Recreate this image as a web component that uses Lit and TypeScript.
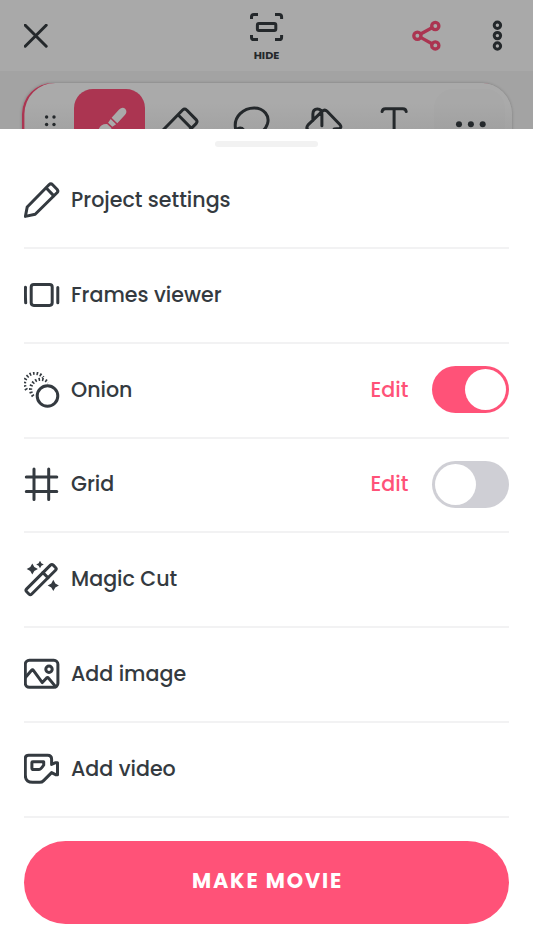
import { LitElement, html, css, svg, nothing } from "lit";
import { customElement, property, state } from "lit/decorators.js";
import { classMap } from "lit/directives/class-map.js";

const star = (x: number, y: number, r: number) =>
  svg`<path class="fill" d="M${x} ${y - r}L${x + r * 0.36} ${y - r * 0.36}L${x + r} ${y}L${x + r * 0.36} ${y + r * 0.36}L${x} ${y + r}L${x - r * 0.36} ${y + r * 0.36}L${x - r} ${y}L${x - r * 0.36} ${y - r * 0.36}Z"/>`;

const icons: Record<string, unknown> = {
  pencil: svg`<path d="M1.4 34.4L3.2 25L25 2.8Q26.8 1 28.6 2.8L33 7.2Q34.7 9 33 10.8L11.2 32.3Z"/><path d="M22.5 6.2L29.6 13.6"/>`,
  frames: svg`<rect x="7.2" y="7.4" width="21" height="21" rx="2.6"/><path d="M1.5 10.2Q1.2 18 1.7 25.8M33.8 10.4V25.8"/>`,
  onion: svg`<circle cx="23.5" cy="24" r="10.3"/><path class="dots" d="M2.6 17.9A10.3 10.3 0 1 1 19.2 5.4"/><path class="dots" d="M9.2 24.2A10.1 10.1 0 0 1 24.2 10.6"/>`,
  grid: svg`<path d="M10 2.9V33.6M24.7 2.9V33.6M2.3 10.9H32.8M2.3 25.6H32.8"/>`,
  magic: svg`<g transform="translate(17.1 18.6) rotate(-45)"><rect x="-18.8" y="-3.6" width="37.6" height="7.2" rx="2"/><path d="M6.2 -3.6V3.6"/></g>${star(8.3, 8, 5.6)}${star(16, 3.5, 3.8)}${star(29.3, 24.4, 5.6)}`,
  image: svg`<rect x="1.3" y="4.3" width="32.6" height="27" rx="4"/><circle cx="25" cy="13.3" r="3.2"/><path d="M1.6 21.2L7.6 14.2Q8.5 13.2 9.4 14.4L18.3 26.6L22.6 21.9Q23.6 21 24.4 22L31.6 30.6"/>`,
  video: svg`<path d="M4.6 4.3H23.6Q27.6 4.3 27.6 8.3V13.4L31.6 11.7H33.5V23.7H31.6L27.6 21.6L19.6 29.6Q18 31.3 15.6 31.3H8.6Q1.3 31.3 1.3 24V7.6Q1.3 4.3 4.6 4.3Z"/><path d="M8.8 10.7H19.7V14Q16.8 18.6 14.6 18.6H9.4Q7.9 18.6 7.9 17V11.6Q7.9 10.7 8.8 10.7Z"/>`,
};

@customElement("toggle-switch")
export class ToggleSwitch extends LitElement {
  @property({ type: Boolean }) on = false;
  static styles = css`
    :host { display: block; flex: none; }
    .track { display: flex; box-sizing: border-box; width: 77.3px; height: 47px; padding: 3px; border-radius: 24px; background: #cfcfd5; }
    .track.on { justify-content: flex-end; background: #ff5278; }
    .knob { width: 41px; height: 41px; border-radius: 50%; background: #fff; }
  `;
  render() {
    return html`<div class=${classMap({ track: true, on: this.on })}><div class="knob"></div></div>`;
  }
}

interface Item { icon: string; label: string; toggle?: boolean; on?: boolean; }

@customElement("app-root")
export class AppRoot extends LitElement {
  @state() private items: Item[] = [
    { icon: "pencil", label: "Project settings" },
    { icon: "frames", label: "Frames viewer" },
    { icon: "onion", label: "Onion", toggle: true, on: true },
    { icon: "grid", label: "Grid", toggle: true, on: false },
    { icon: "magic", label: "Magic Cut" },
    { icon: "image", label: "Add image" },
    { icon: "video", label: "Add video" },
  ];

  static styles = css`
    :host { display: flex; flex-direction: column; height: 947px; overflow: hidden; background: #fff; color: #343a40; font-family: Poppins, Inter, sans-serif; }
    svg { display: block; flex: none; fill: none; stroke: currentColor; stroke-width: 3; stroke-linecap: round; stroke-linejoin: round; }
    .fill { fill: currentColor; stroke: none; }
    .dots { stroke-width: 3.2; stroke-linecap: butt; stroke-dasharray: 1.6 1.9; }
    .backdrop { flex: none; height: 129px; overflow: hidden; background: #a3a3a3; color: #24282b; }
    .bar { display: flex; justify-content: space-between; height: 71px; padding: 0 24px; box-sizing: border-box; background: #a9a9a9; }
    .side { display: flex; align-items: center; width: 120px; }
    .side.end { justify-content: flex-end; gap: 51px; }
    .pink { color: #ab3551; stroke-width: 3.3; }
    .hide { display: flex; flex-direction: column; align-items: center; padding-top: 12px; font: 700 11.2px/16px Poppins, "Noto Sans", sans-serif; }
    .hide span { margin-top: 5px; }
    .tools { display: flex; box-sizing: border-box; width: 490px; height: 90px; margin: 12px 0 0 22px; padding: 6px 6px 0 15px; border-radius: 31px; background: linear-gradient(#aaa 0 20px, #a3a3a3 46px); box-shadow: inset 2.4px 0 0 #ab3551, 0 0 3px rgba(0,0,0,.25); }
    .dotsgrip { width: 37px; }
    .tool { width: 71.2px; height: 84px; flex: none; }
    .tool.active { border-radius: 19px; background: #ab3551; color: #aaa; }
    .tool.more { margin-left: 4px; border-radius: 19px; background: rgba(0,0,0,.012); }
    .sheet { flex: 1; display: flex; flex-direction: column; padding: 12px 24px 23px; }
    .handle { align-self: center; width: 103px; height: 6px; border-radius: 3px; background: #f2f2f2; }
    .list { margin-top: 7px; }
    .row { display: flex; align-items: center; box-sizing: border-box; height: 94.85px; padding-bottom: 1px; border-bottom: 2px solid #f2f2f3; font-size: 20.6px; font-weight: 500; line-height: 28px; }
    .label { flex: 1; margin-left: 11px; white-space: nowrap; }
    .edit { margin-right: 23.3px; color: #ff5278; }
    .make { display: flex; align-items: center; justify-content: center; box-sizing: border-box; width: 100%; height: 83px; margin-top: auto; padding: 0 0 3px 2px; border: 0; border-radius: 42px; background: #ff5278; color: #fff; font: 700 20.8px/28px Poppins, Inter, sans-serif; letter-spacing: 1.85px; }
  `;

  render() {
    return html`
      <div class="backdrop">
        <header class="bar">
          <div class="side"><svg width="24" height="24" viewBox="0 0 24 24"><path d="M1.2 1.2L22.2 22.2M22.2 1.2L1.2 22.2"/></svg></div>
          <div class="hide">
            <svg width="35" height="30" viewBox="249 12 35 30"><path stroke-linecap="butt" d="M251.5 19V16.8Q251.5 14.4 254 14.4H258M275 14.4H279.2Q281.6 14.4 281.6 16.8V19M281.6 35V37.2Q281.6 39.6 279.2 39.6H275M258 39.6H254Q251.5 39.6 251.5 37.2V35"/><rect x="257.4" y="23.4" width="18.4" height="7.2" rx="1.5"/></svg>
            <span>HIDE</span>
          </div>
          <div class="side end">
            <svg class="pink" width="30" height="32" viewBox="411 20 30 32"><circle cx="417.4" cy="35.7" r="3.6"/><circle cx="435.3" cy="26" r="3.6"/><circle cx="435.3" cy="45.4" r="3.6"/><path d="M420.6 34L432 27.7M420.6 37.4L432 43.7"/></svg>
            <svg width="17" height="32" viewBox="492 20 17 32"><circle cx="497.4" cy="25.2" r="3.2"/><circle cx="497.4" cy="35.6" r="3.2"/><circle cx="497.4" cy="46" r="3.2"/></svg>
          </div>
        </header>
        <div class="tools">
          <svg class="dotsgrip" height="40" viewBox="37 89 37 40"><g class="fill"><circle cx="46.6" cy="117" r="1.7"/><circle cx="54" cy="117" r="1.7"/><circle cx="46.6" cy="124.5" r="1.7"/><circle cx="54" cy="124.5" r="1.7"/></g></svg>
          <svg class="tool active" viewBox="0 0 71 84"><g class="fill"><path d="M45 20.5Q48.5 17.2 51.3 20Q53.6 23 50.8 26L43.2 34.2L37.5 28.8Z"/><path d="M36.6 30L42 35.2L38.3 37.7L34 33.7Z"/><path d="M33 35L37.3 39Q37.5 50 24 50Q20 50 24 42Q26 34.5 33 35Z"/></g></svg>
          <svg class="tool" viewBox="0 0 71 84"><path d="M18 41L37.5 21Q39.5 19.1 41.6 21L51 30.6Q52.8 32.6 51 34.6L34 52M33.2 26L46.3 39.3"/></svg>
          <svg class="tool" viewBox="0 0 71 84"><path d="M19.5 40C17 27 28 19 38 19C48 19 54 27 51.3 35C48 44 39 48 30 45M20 43C20 38.5 25.5 38 27.5 41"/></svg>
          <svg class="tool" viewBox="0 0 71 84"><path d="M20 41Q17.6 39 20 35.8L34 22.3Q36.7 20 39 22.3L52 35.8Q53.8 38.2 51.5 39.5L46 40M24.8 31.5V25Q24.8 20 29.3 20Q33.8 20 33.8 25V36.8"/></svg>
          <svg class="tool" viewBox="0 0 71 84"><path d="M23 22.6Q23.3 19.7 26.3 19.7H43.7Q46.8 19.7 47.1 22.6M35 20V48"/></svg>
          <svg class="tool more" viewBox="0 0 71 84"><g class="fill"><circle cx="24.9" cy="35.3" r="3"/><circle cx="36.8" cy="35.3" r="3"/><circle cx="48.6" cy="35.3" r="3"/></g></svg>
        </div>
      </div>
      <main class="sheet">
        <div class="handle"></div>
        <div class="list">
          ${this.items.map((i) => html`<div class="row">
            <svg width="36" height="36" viewBox="0 0 36 36">${icons[i.icon]}</svg>
            <span class="label">${i.label}</span>
            ${i.toggle ? html`<span class="edit">Edit</span><toggle-switch ?on=${i.on}></toggle-switch>` : nothing}
          </div>`)}
        </div>
        <button class="make">MAKE MOVIE</button>
      </main>`;
  }
}
